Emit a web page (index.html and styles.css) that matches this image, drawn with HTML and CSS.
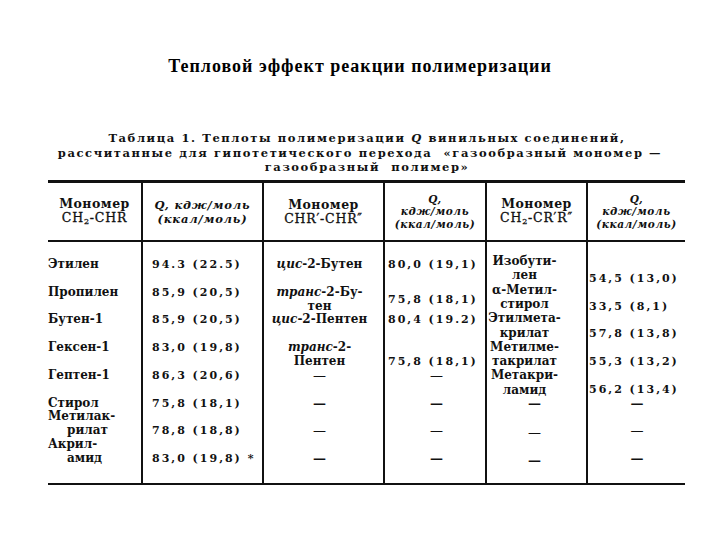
FILE: index.html
```html
<!DOCTYPE html>
<html lang="ru">
<head>
<meta charset="utf-8">
<title>Тепловой эффект реакции полимеризации</title>
<link rel="stylesheet" href="styles.css">
</head>
<body>
<h1 class="title">Тепловой эффект реакции полимеризации</h1>
<div class="caption">
  <div class="cap-shift">Таблица 1. Теплоты полимеризации <i>Q</i> винильных соединений,</div>
  <div>рассчитанные для гипотетического перехода&nbsp; «газообразный мономер —</div>
  <div class="cap-shift">газообразный&nbsp; полимер»</div>
</div>
<div class="table">
  <div class="thead">
    <div class="th">
      <div class="mh">Мономер</div>
      <div class="fm">CH<span class="sub">2</span>-CHR</div>
    </div>
    <div class="th">
      <div class="qh">Q, кдж/моль</div>
      <div class="qh">(ккал/моль)</div>
    </div>
    <div class="th">
      <div class="mh">Мономер</div>
      <div class="fm">CHR′-CHR″</div>
    </div>
    <div class="th qs">
      <div>Q,</div>
      <div>кдж/моль</div>
      <div>(ккал/моль)</div>
    </div>
    <div class="th">
      <div class="mh">Мономер</div>
      <div class="fm">CH<span class="sub">2</span>-CR′R″</div>
    </div>
    <div class="th qs">
      <div>Q,</div>
      <div>кдж/моль</div>
      <div>(ккал/моль)</div>
    </div>
  </div>
  <div class="tbody">
    <div class="col c1">
      <div class="ln">Этилен</div>
      <div class="ln"></div>
      <div class="ln">Пропилен</div>
      <div class="ln"></div>
      <div class="ln">Бутен-1</div>
      <div class="ln"></div>
      <div class="ln">Гексен-1</div>
      <div class="ln"></div>
      <div class="ln">Гептен-1</div>
      <div class="ln"></div>
      <div class="ln">Стирол</div>
      <div class="ln">Метилак-</div>
      <div class="ln ind">рилат</div>
      <div class="ln">Акрил-</div>
      <div class="ln ind">амид</div>
    </div>
    <div class="col c2 num">
      <div class="ln">94.3 (22.5)</div>
      <div class="ln"></div>
      <div class="ln">85,9 (20,5)</div>
      <div class="ln"></div>
      <div class="ln">85,9 (20,5)</div>
      <div class="ln"></div>
      <div class="ln">83,0 (19,8)</div>
      <div class="ln"></div>
      <div class="ln">86,3 (20,6)</div>
      <div class="ln"></div>
      <div class="ln">75,8 (18,1)</div>
      <div class="ln"></div>
      <div class="ln">78,8 (18,8)</div>
      <div class="ln"></div>
      <div class="ln">83,0 (19,8) *</div>
    </div>
    <div class="col c3">
      <div class="ln"><i>цис</i>-2-Бутен</div>
      <div class="ln"></div>
      <div class="ln"><i>транс</i>-2-Бу-</div>
      <div class="ln">тен</div>
      <div class="ln"><i>цис</i>-2-Пентен</div>
      <div class="ln"></div>
      <div class="ln"><i>транс</i>-2-</div>
      <div class="ln">Пентен</div>
      <div class="ln dash">—</div>
      <div class="ln"></div>
      <div class="ln dash bold">—</div>
      <div class="ln"></div>
      <div class="ln dash">—</div>
      <div class="ln"></div>
      <div class="ln dash bold">—</div>
    </div>
    <div class="col c4 num">
      <div class="ln">80,0 (19,1)</div>
      <div class="gap15"></div>
      <div class="ln">75,8 (18,1)</div>
      <div class="gap05"></div>
      <div class="ln">80,4 (19.2)</div>
      <div class="ln"></div>
      <div class="ln"></div>
      <div class="ln">75,8 (18,1)</div>
      <div class="ln dash">—</div>
      <div class="ln"></div>
      <div class="ln dash bold">—</div>
      <div class="ln"></div>
      <div class="ln dash">—</div>
      <div class="ln"></div>
      <div class="ln dash bold">—</div>
    </div>
    <div class="col c5">
      <div class="ln">Изобути-</div>
      <div class="ln">лен</div>
      <div class="ln">α-Метил-</div>
      <div class="ln">стирол</div>
      <div class="ln">Этилмета-</div>
      <div class="ln">крилат</div>
      <div class="ln">Метилме-</div>
      <div class="ln">такрилат</div>
      <div class="ln">Метакри-</div>
      <div class="ln">ламид</div>
      <div class="ln dash bold">—</div>
      <div class="ln"></div>
      <div class="ln dash">—</div>
      <div class="ln"></div>
      <div class="ln dash bold">—</div>
    </div>
    <div class="col c6 num">
      <div class="ln"></div>
      <div class="ln">54,5 (13,0)</div>
      <div class="ln"></div>
      <div class="ln">33,5 (8,1)</div>
      <div class="ln"></div>
      <div class="ln">57,8 (13,8)</div>
      <div class="ln"></div>
      <div class="ln">55,3 (13,2)</div>
      <div class="ln"></div>
      <div class="ln">56,2 (13,4)</div>
      <div class="ln dash bold">—</div>
      <div class="ln"></div>
      <div class="ln dash">—</div>
      <div class="ln"></div>
      <div class="ln dash bold">—</div>
    </div>
  </div>
</div>
</body>
</html>
```
FILE: styles.css
```css
* { box-sizing: border-box; }
html, body { margin: 0; padding: 0; background: #fff; }
body {
  width: 720px;
  height: 540px;
  color: #111;
  font-family: "DejaVu Serif", serif;
  overflow: hidden;
}
.title {
  margin: 56px 0 0;
  font-family: "Liberation Serif", serif;
  font-size: 18px;
  font-weight: bold;
  letter-spacing: 1px;
  line-height: 20px;
  text-align: center;
  color: #000;
}
.caption {
  margin-top: 55px;
  text-align: center;
  font-size: 11.5px;
  font-weight: bold;
  letter-spacing: 1.6px;
  line-height: 14.7px;
  white-space: nowrap;
}
.cap-shift { padding-left: 14px; }
.table {
  margin: 5px 0 0 48px;
  width: 637px;
  border-top: 3px solid #111;
  border-bottom: 2px solid #111;
}
.thead, .tbody {
  display: grid;
  grid-template-columns: 93px 121px 121px 102px 101px 99px;
}
.thead {
  height: 59px;
  border-bottom: 2px solid #111;
}
.th {
  display: flex;
  flex-direction: column;
  justify-content: center;
  align-items: center;
  border-left: 2px solid #111;
  line-height: 12.5px;
  white-space: nowrap;
}
.th:first-child, .col:first-child { border-left: 0; }
.mh { font-size: 12.5px; font-weight: bold; letter-spacing: 0.5px; line-height: 14px; }
.fm { font-size: 12.5px; letter-spacing: 0.8px; line-height: 14px; -webkit-text-stroke: 0.3px #111; }
.sub { font-size: 8px; position: relative; top: 2px; }
.qh { font-size: 11.5px; font-style: italic; font-weight: bold; letter-spacing: 0.8px; line-height: 14px; }
.qs { font-size: 10.5px; font-style: italic; font-weight: bold; letter-spacing: 0.6px; }
.tbody { height: 241px; }
.col {
  border-left: 2px solid #111;
  padding-top: 16px;
  font-size: 12px;
  font-weight: bold;
  white-space: nowrap;
}
.ln { height: 13.85px; line-height: 13.85px; }
.gap15 { height: 20.8px; }
.gap05 { height: 6.9px; }
.num { font-size: 11px; letter-spacing: 2px; }
.c1 { padding-left: 0; }
.c1 .ind { padding-left: 19px; }
.c2 { padding-left: 9px; }
.c3 { text-align: center; padding-right: 8px; }
.c4 { padding-left: 3px; }
.c5 { text-align: center; padding-right: 24px; padding-top: 12px; }
.c5 .ln { height: 14.3px; line-height: 14.3px; }
.c5 .dash { padding-left: 20px; }
.c6 { padding-left: 1px; }
.c6 .dash { text-align: center; letter-spacing: 0; }
.c4 .dash { text-align: center; letter-spacing: 0; }
.dash { font-weight: normal; font-size: 13px; }
.dash.bold { font-weight: bold; }
i { font-style: italic; }
```
